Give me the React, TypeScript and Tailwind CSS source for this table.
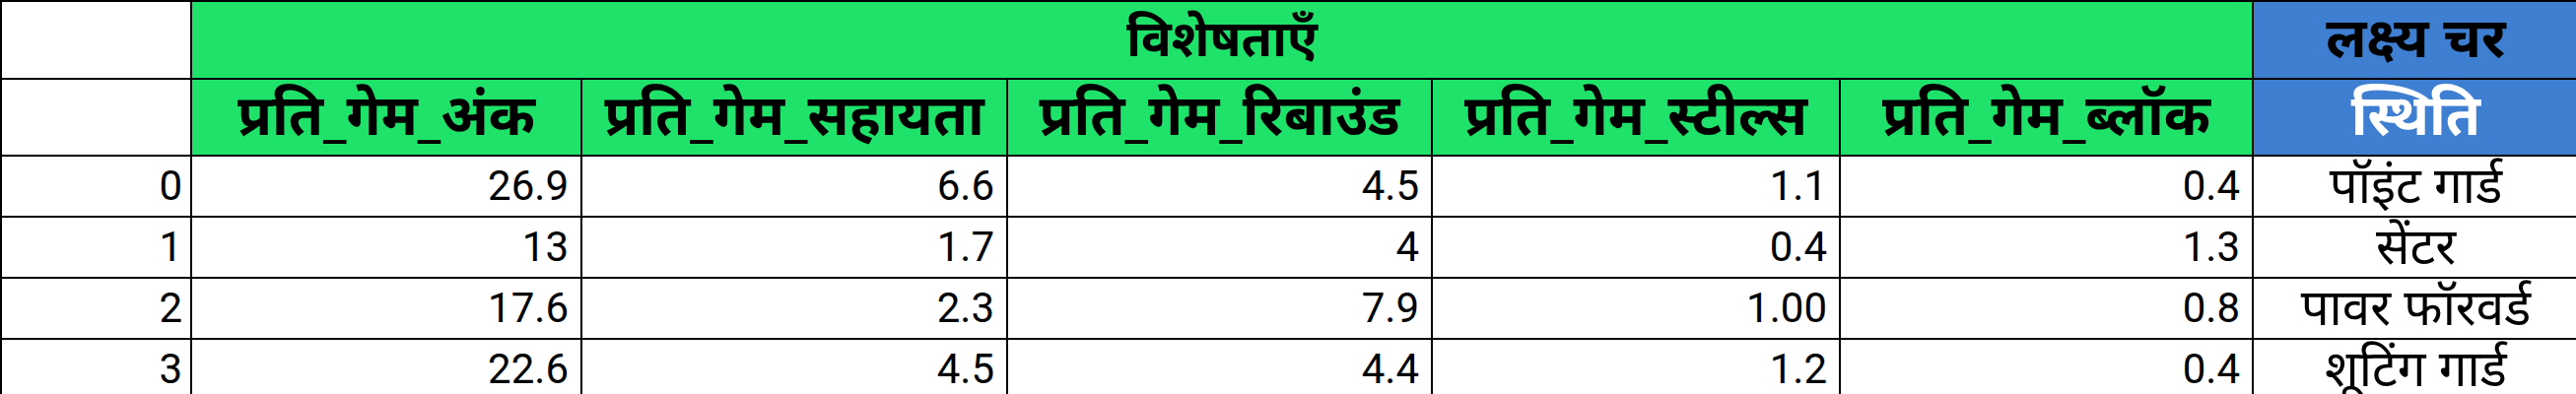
import React from 'react'

const headers = [
  'प्रति_गेम_अंक',
  'प्रति_गेम_सहायता',
  'प्रति_गेम_रिबाउंड',
  'प्रति_गेम_स्टील्स',
  'प्रति_गेम_ब्लॉक',
]

const rows = [
  { idx: '0', vals: ['26.9', '6.6', '4.5', '1.1', '0.4'], pos: 'पॉइंट गार्ड' },
  { idx: '1', vals: ['13', '1.7', '4', '0.4', '1.3'], pos: 'सेंटर' },
  { idx: '2', vals: ['17.6', '2.3', '7.9', '1.00', '0.8'], pos: 'पावर फॉरवर्ड' },
  { idx: '3', vals: ['22.6', '4.5', '4.4', '1.2', '0.4'], pos: 'शूटिंग गार्ड' },
]

const hindi = 'font-["Noto_Sans_Devanagari","Noto_Sans",sans-serif]'
const num = "font-['Roboto',sans-serif] text-[42px] leading-none"
const cell = 'border-r-2 border-b-2 border-black'
const lastCell = 'border-b-2 border-black'

export default function App() {
  return (
    <div className="w-[2614px] h-[400px] overflow-hidden bg-white">
      <div className="grid grid-cols-[193px_396px_432px_431px_414px_419px_329px] grid-rows-[79px_78px_62px_62px_62px_62px] border-l-2 border-t-2 border-black w-max text-black">
        {/* group header row */}
        <div className={`${cell} bg-white`} />
        <div className={`${cell} col-span-5 bg-[#1fe26b] flex items-center justify-center pt-2 ${hindi} font-bold text-[51px] leading-none`}>
          विशेषताएँ
        </div>
        <div className={`${lastCell} bg-[#3f7fd2] flex items-center justify-center pt-2 ${hindi} font-bold text-[56px] leading-none whitespace-nowrap`}>
          लक्ष्य चर
        </div>

        {/* column header row */}
        <div className={`${cell} bg-white`} />
        {headers.map(h => (
          <div key={h} className={`${cell} bg-[#1fe26b] flex items-center justify-center pt-2 ${hindi} font-bold text-[57px] leading-none whitespace-nowrap`}>
            {h}
          </div>
        ))}
        <div className={`${lastCell} bg-[#3f7fd2] flex items-center justify-center pt-2 ${hindi} font-bold text-[57px] leading-none text-white`}>
          स्थिति
        </div>

        {/* data rows */}
        {rows.map(r => (
          <React.Fragment key={r.idx}>
            <div className={`${cell} flex items-center justify-end pr-2 ${num}`}>{r.idx}</div>
            {r.vals.map((v, i) => (
              <div key={i} className={`${cell} flex items-center justify-end pr-3 ${num}`}>
                {v}
              </div>
            ))}
            <div className={`${lastCell} flex items-center justify-center pt-2 ${hindi} text-[51px] leading-none whitespace-nowrap`}>
              {r.pos}
            </div>
          </React.Fragment>
        ))}
      </div>
    </div>
  )
}
